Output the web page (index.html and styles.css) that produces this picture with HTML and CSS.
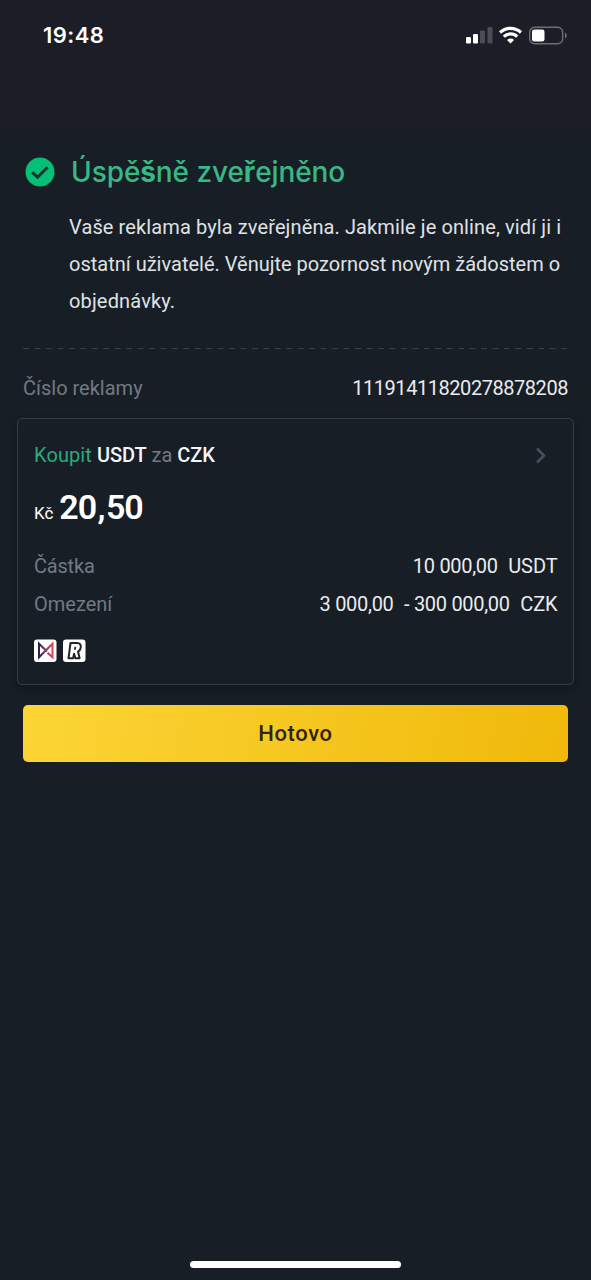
FILE: index.html
```html
<!DOCTYPE html>
<html lang="cs">
<head>
<meta charset="utf-8">
<title>Úspěšně zveřejněno</title>
<link rel="stylesheet" href="styles.css">
</head>
<body>
<div class="screen">
  <header class="status">
    <span class="clock">19:48</span>
    <svg class="status-icons" width="104" height="20" viewBox="0 0 104 20">
      <g fill="#fff">
        <rect x="1" y="12" width="5" height="6.500" rx="1.200"/>
        <rect x="8" y="9" width="5" height="9.500" rx="1.200"/>
      </g>
      <g fill="#4a4d54">
        <rect x="15" y="5.500" width="5" height="13" rx="1.200"/>
        <rect x="22.500" y="2" width="5" height="16.500" rx="1.200"/>
      </g>
      <g fill="none" stroke="#fff" stroke-width="3.200">
        <path d="M35 7.500a15.200 15.200 0 0 1 21 0"/>
        <path d="M38.800 11.600a9.600 9.600 0 0 1 13.400 0"/>
      </g>
      <path d="M45.500 18.600l-3.500-3.600a5 5 0 0 1 7 0z" fill="#fff"/>
      <rect x="64.700" y="2.200" width="33" height="16.600" rx="5" fill="none" stroke="#6c6f75" stroke-width="1.400"/>
      <rect x="67" y="4.500" width="12.500" height="12" rx="2.200" fill="#fff"/>
      <path d="M100 7.500c2.200 1 2.200 5 0 6z" fill="#6c6f75"/>
    </svg>
  </header>
  <main class="content">
    <div class="heading">
      <svg class="tick" width="30" height="30" viewBox="0 0 30 30">
        <circle cx="15" cy="15" r="14.500" fill="#03c076"/>
        <path d="M7.300 15.300l5.300 4.900 10-10" fill="none" stroke="#18342f" stroke-width="3"/>
      </svg>
      <h1 class="title">Úspě<b>š</b>ně zve<b>ř</b>ejněno</h1>
    </div>
    <p class="message"><span class="m1">Vaše reklama byla zveřejněna. Jakmile je online, vidí ji i</span><br><span class="m2">ostatní uživatelé. Věnujte pozornost novým žádostem o</span><br><span class="m3">objednávky.</span></p>
    <svg class="rule" width="545" height="2" viewBox="0 0 545 2"><path d="M0 .5H545" stroke="#39414a" stroke-width="1" stroke-dasharray="6 5.450"/></svg>
    <div class="row number">
      <span class="label">Číslo reklamy</span>
      <span class="value v-num">11191411820278878208</span>
    </div>
    <section class="card">
      <div class="row pair">
        <div class="pair-text"><span class="buy">Koupit</span><span class="code">USDT</span><span class="for">za</span><span class="code">CZK</span></div>
        <svg class="chevron" width="12" height="18" viewBox="0 0 12 18"><path d="M2 2.500l7 7-7 7" fill="none" stroke="#474d5c" stroke-width="2.600"/></svg>
      </div>
      <div class="price"><span class="currency">Kč</span><span class="amount">20<span class="comma">,</span>50</span></div>
      <div class="row detail"><span class="label l-sum">Částka</span><span class="value figures"><span>10 000,00</span><span class="unit">USDT</span></span></div>
      <div class="row detail"><span class="label">Omezení</span><span class="value figures"><span>3 000,00</span><span>- 300 000,00</span><span class="unit">CZK</span></span></div>
      <div class="methods">
        <svg width="23" height="23" viewBox="0 0 23 23">
          <defs><linearGradient id="brand"><stop offset="0" stop-color="#28204f"/><stop offset=".5" stop-color="#8c3c69"/><stop offset="1" stop-color="#d84b55"/></linearGradient></defs>
          <rect y=".5" width="22.500" height="22.500" rx="3" fill="#fff"/>
          <path d="M13.500 13.700L18.500 18.300V4.700L5 18.300V4.700L11 10.600M8.500 8L13 12.500" fill="none" stroke="url(#brand)" stroke-width="2"/>
        </svg>
        <svg width="23" height="23" viewBox="0 0 23 23">
          <rect y=".5" width="22.500" height="22.500" rx="3" fill="#fff"/>
          <path d="M7.500 4H14c3.200 0 4.200 2 3.700 4.700-.4 2-1.300 3.200-2.700 3.900l1.600 6.700h-4.200l-1.300-4.500-1 4.500H5.500z" fill="#fff" stroke="#242424" stroke-width="2" stroke-linejoin="round"/>
          <path d="M12.400 7.800l-.6 3" fill="none" stroke="#242424" stroke-width="1.700"/>
        </svg>
      </div>
    </section>
    <button class="done"><span>Hotovo</span></button>
  </main>
  <div class="home"></div>
</div>
</body>
</html>
```
FILE: styles.css
```css
* { box-sizing: border-box; }
body { margin: 0; background: #181e25; font-family: Roboto, "Noto Sans", sans-serif; }
.screen { width: 591px; height: 1280px; display: flex; flex-direction: column; background: linear-gradient(#1b1e26 0 128px, #181e25 128px); color: #eaecef; }
.status { height: 128px; padding: 21px 22px 0 43px; display: flex; justify-content: space-between; align-items: flex-start; }
.clock { font: 600 22px/29px Inter, sans-serif; color: #fff; letter-spacing: .45px; }
.status-icons { margin-top: 4px; }
.content { flex: 1; padding: 23px 23px 0; }
.heading { display: flex; align-items: center; gap: 16px; height: 42px; padding-left: 2px; }
.title { margin: 0; font: 500 28px/42px Inter, sans-serif; color: #38b886; white-space: nowrap; letter-spacing: -.08px; }
.title b { font-weight: 700; }
.message { margin: 16px 0 0 46px; font-size: 20px; line-height: 37px; white-space: nowrap; color: #dfe2e6; }
.m1 { letter-spacing: .11px; }
.m3 { letter-spacing: .15px; }
.rule { display: block; margin-top: 28px; }
.row { display: flex; justify-content: space-between; align-items: center; white-space: nowrap; font-size: 20px; }
.number { height: 38px; margin-top: 19px; }
.v-num { letter-spacing: -.45px; }
.label { color: #727984; }
.card { margin: 11px -6px 0; height: 267px; padding: 17px 16px 0; border: 1px solid #363d45; border-radius: 5px; box-shadow: 0 3px 10px rgba(0, 0, 0, .3); }
.pair { height: 38px; padding-right: 10px; }
.pair-text { display: flex; gap: 5px; }
.buy { color: #2cab78; letter-spacing: .1px; }
.code { font-weight: 500; color: #f4f5f7; letter-spacing: -.1px; }
.for { color: #727984; }
.price { display: flex; align-items: baseline; gap: 6px; height: 50px; margin-top: 11px; line-height: 44px; color: #fff; white-space: nowrap; }
.currency { font-size: 17px; }
.amount { font-size: 34px; font-weight: 600; letter-spacing: -1.1px; }
.comma { margin: 0 1.500px; }
.detail { height: 38px; }
.price + .detail { margin-top: 12px; }
.value { display: flex; gap: 10px; }
.figures { letter-spacing: -.3px; gap: 10.500px; margin-right: -.5px; }
.unit { letter-spacing: -.1px; }
.l-sum { letter-spacing: -.2px; }
.methods { display: flex; gap: 6px; margin-top: 16px; }
.done { display: block; width: 100%; height: 57px; margin-top: 20px; padding: 0; border: 0; border-radius: 5px; background: linear-gradient(100deg, #fcd535, #f0b90b); font: 500 22px/58px Roboto, sans-serif; letter-spacing: .6px; color: #302510; }
.home { width: 211px; height: 7px; margin: 0 auto 12px; border-radius: 4px; background: #fff; }
```
